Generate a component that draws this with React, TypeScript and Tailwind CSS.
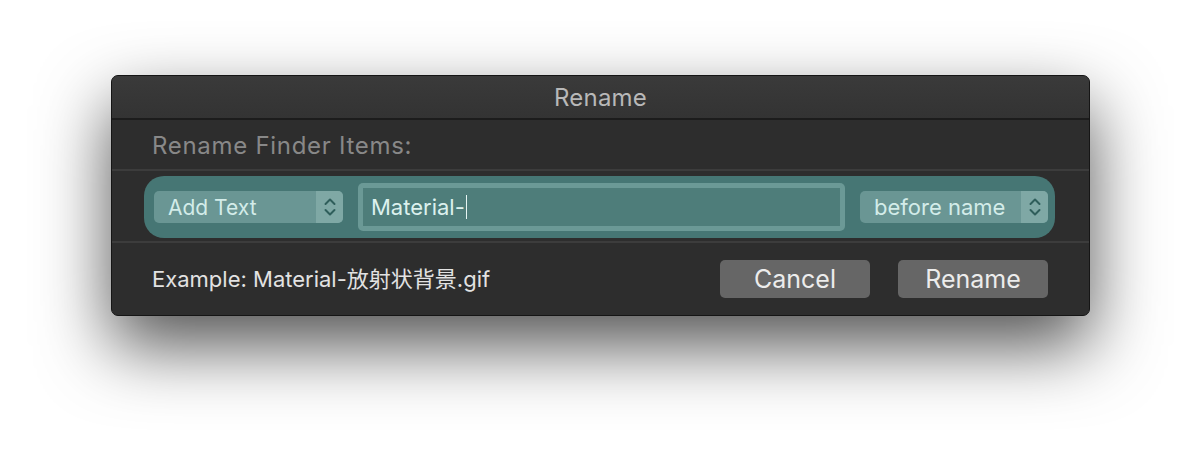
import React from 'react';

const Stepper = () => (
  <div className="flex h-full w-[27px] items-center justify-center rounded-r-[5px] bg-[#7fa8a5]">
    <svg width="14" height="22" viewBox="0 0 14 22" fill="none">
      <path d="M2.5 8 L7 3.5 L11.5 8" stroke="#2f5e5b" strokeWidth="2" strokeLinecap="round" strokeLinejoin="round" />
      <path d="M2.5 14 L7 18.5 L11.5 14" stroke="#2f5e5b" strokeWidth="2" strokeLinecap="round" strokeLinejoin="round" />
    </svg>
  </div>
);

const PopUp = ({ label, width, size }: { label: string; width: string; size: string }) => (
  <div className={`flex h-[32px] ${width} items-center rounded-[5px] bg-[#6a9694]`}>
    <span className={`flex-1 pl-[14px] ${size} leading-none text-[#d3ece9]`}>{label}</span>
    <Stepper />
  </div>
);

const App = () => {
  return (
    <div className="h-[464px] w-[1202px] bg-white pl-[111px] pt-[75px] font-['Inter','Noto_Sans_CJK_SC',sans-serif]">
      <div className="flex h-[241px] w-[979px] flex-col overflow-hidden rounded-[7px] border border-[#151515] bg-[#2d2d2d] shadow-[0_30px_70px_rgba(0,0,0,0.68)]">
        <div className="flex h-[44px] items-center justify-center border-b-2 border-[#1c1c1c] bg-gradient-to-b from-[#3a3a3a] to-[#333333] pt-[2px]">
          <span className="text-[24px] leading-none tracking-[0.2px] text-[#b8b8b8]">Rename</span>
        </div>

        <div className="flex h-[51px] items-center border-b-2 border-[#3c3c3c] pl-[40px] pt-[2px]">
          <span className="text-[24px] leading-none tracking-[0.7px] text-[#888888]">Rename Finder Items:</span>
        </div>

        <div className="flex h-[72px] items-center border-b-2 border-[#3c3c3c] pl-[32px] pr-[34px] pt-[2px]">
          <div className="flex h-[62px] flex-1 items-center gap-[15px] rounded-[20px] bg-[#467674] pl-[10px] pr-[7px]">
            <PopUp label="Add Text" width="w-[189px]" size="text-[21px]" />
            <div className="flex h-[48px] flex-1 rounded-[5px] bg-[#6b9996] p-[5px]">
              <div className="flex flex-1 items-center bg-[#4e7d7a] pl-[8px]">
                <span className="text-[22px] leading-none text-[#dcf1ee]">Material-</span>
                <span className="ml-[1px] h-[24px] w-[1px] bg-[#e6f5f3]" />
              </div>
            </div>
            <PopUp label="before name" width="w-[188px]" size="text-[22px]" />
          </div>
        </div>

        <div className="flex flex-1 items-center justify-between pl-[40px] pr-[41px]">
          <span className="text-[22px] leading-none text-[#e2e2e2]">Example: Material-放射状背景.gif</span>
          <div className="flex gap-[28px]">
            <button className="h-[38px] w-[150px] rounded-[5px] bg-[#666666] text-[25px] leading-none text-[#ececec]">Cancel</button>
            <button className="h-[38px] w-[150px] rounded-[5px] bg-[#666666] text-[25px] leading-none text-[#ececec]">Rename</button>
          </div>
        </div>
      </div>
    </div>
  );
};

export default App;
